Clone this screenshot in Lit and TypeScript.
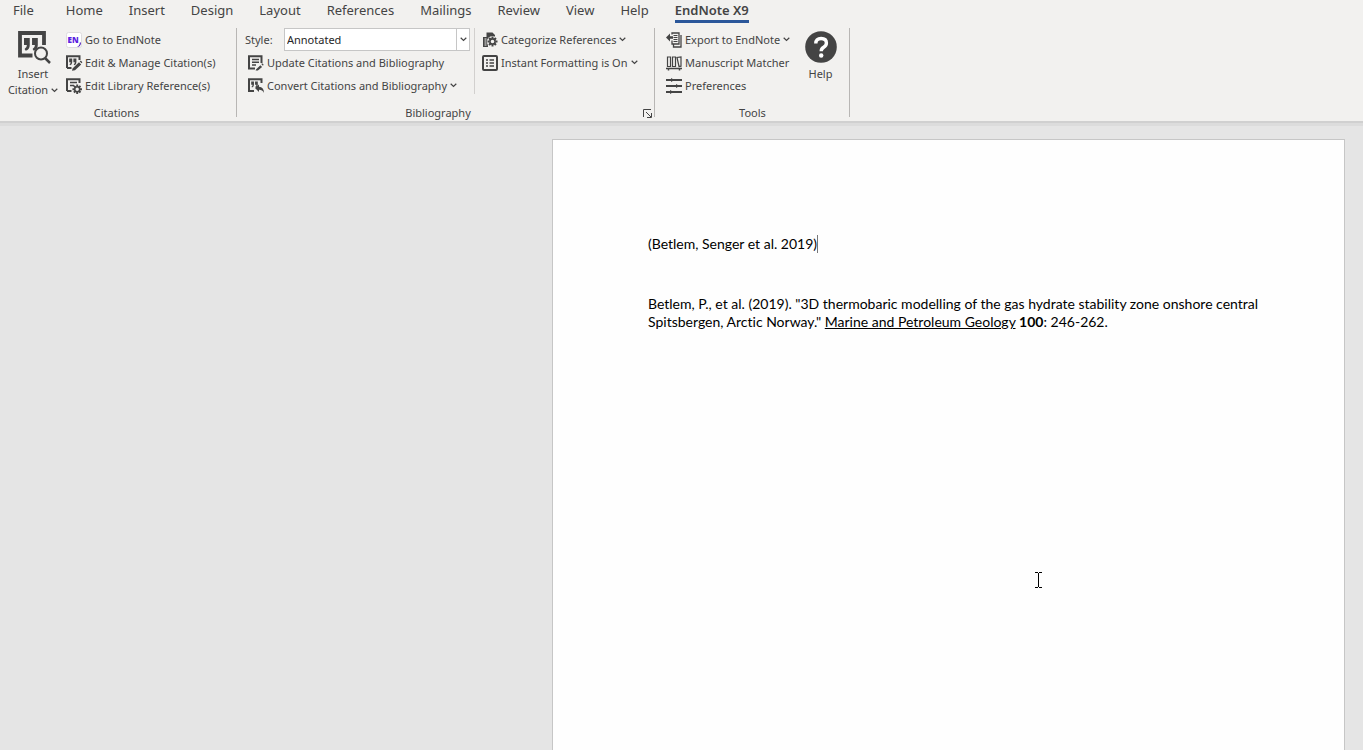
import { LitElement, html, css, svg } from "lit";
import { customElement, state } from "lit/decorators.js";

const quotePair = svg`<path d="M0 0h5v6q0 4-3.500 5L.5 9.600Q2.500 8.500 2.500 6H0zM7 0h5v6q0 4-3.500 5L7.500 9.600Q9.500 8.500 9.500 6H7z"/>`;

const gear = svg`<path d="M-1-5h2v2h-2zM-1 3h2v2h-2zM-5-1h2v2h-2zM3-1h2v2H3z"/><path d="M-3-3L3 3M3-3L-3 3" stroke="currentColor" stroke-width="1.800" transform="scale(1.150)"/><circle r="2.600" fill="#f2f1ef" stroke="currentColor" stroke-width="1.600"/>`;

const frame = svg`<path d="M1 13V1.200h12.500V5M1 13h4.500" fill="none" stroke="currentColor" stroke-width="2"/>`;

const glyphs: Record<string, unknown> = {
  endnote: svg`<rect x=".5" y=".5" width="15" height="15" rx="2" fill="#fff" stroke="#dedcdf"/>
    <text x="1.500" y="10.500" font-size="8" font-weight="800" font-family="Open Sans, sans-serif" fill="#5b1ee0">EN</text>
    <path d="M13.800 10.500q.2 3-3 4.500 4 0 4.200-4.500z" fill="#4a16b8"/>`,
  editCitation: svg`${frame}<g transform="translate(3.200 3.600) scale(.6)">${quotePair}</g>
    <path d="M6.500 13.500L13 7.200l2.200 2.200L9 15.200l-3 .6zM13.800 6.400l1-.9 1.600 1.700-.9 1z"/>`,
  editLibrary: svg`${frame}<path d="M4 4.500h7M4 7.500h4" stroke="currentColor" stroke-width="1.500"/>
    <g transform="translate(11.200 11.200) scale(.95)">${gear}</g>`,
  update: svg`<path d="M7 13.500H1V1.200h12.500V8" fill="none" stroke="currentColor" stroke-width="2"/>
    <path d="M4 4.500h7M4 7.300h7M4 10h4" stroke="currentColor" stroke-width="1.500"/>
    <path d="M8.200 14.200l4.200-4 1.700 1.700-4.200 3.700H7.600zM14.200 8.300l1.500 1.500-.8.900-1.600-1.600z"/>`,
  convert: svg`<path d="M6 13H1V1.200h12.500V5" fill="none" stroke="currentColor" stroke-width="2"/>
    <g transform="translate(3.200 3.400) scale(.55)">${quotePair}</g>
    <path d="M7 10l4-3.500v2.200q5 .3 5 6.300-1.500-3.300-5-3.300v2.200z"/>`,
  categorize: svg`<path d="M4.500.5h6L13 3v3H8L5.500 9 6 15H1V5h3.500z"/>
    <path d="M2.500 7h2M2.500 9h2M2.500 11h2M2.500 13h2" stroke="#f2f1ef"/>
    <circle cx="10.500" cy="9.500" r="5.500" fill="#f2f1ef"/><g transform="translate(10.500 9.500)">${gear}</g>`,
  formatting: svg`<rect x="1" y="1" width="14" height="14" rx="1" fill="none" stroke="currentColor" stroke-width="2"/>
    <path d="M4 5h2M4 8h2M4 11h2M7.500 5H12M7.500 8H12M7.500 11H12" stroke="currentColor" stroke-width="1.700"/>`,
  exportTo: svg`<path d="M6 2.500V1h7v11H6V8.500M15 3v12H7.500v-2.500" fill="none" stroke="currentColor" stroke-width="1.300"/>
    <path d="M7.500 3.500h4M7.500 5.500h4M7.500 7.500h4M7.500 9.500h4" stroke="currentColor"/>
    <path d="M0 5.500l4-4v2.800h3v2.400H4v2.800z"/>`,
  matcher: svg`<path d="M1.500 2v9.500h3V2zM6.500 2v9.500h3V2zM11 2.500l2 9 2-.3V2z" fill="none" stroke="currentColor" stroke-width="1.200"/>
    <path d="M0 13.500h16M2.500 13v2.500M13.500 13v2.500" stroke="currentColor" stroke-width="1.500"/>`,
  preferences: svg`<path d="M0 2h16M0 8h16M0 14h16" stroke="currentColor" stroke-width="2"/>
    <path d="M5 0l3.500 2L5 4zM10 6l3.500 2-3.500 2zM4 12l3.500 2L4 16z"/>`,
};

const icon = (name: string) =>
  html`<svg class="icon" viewBox="0 0 16 16" fill="currentColor" aria-hidden="true">${glyphs[name]}</svg>`;

const chevron = html`<svg class="chevron" viewBox="0 0 7 5" aria-hidden="true"><path d="M.7.8l2.800 2.700L6.300.8" fill="none" stroke="currentColor" stroke-width="1.200"/></svg>`;

const command = (name: string, label: string, menu = false) =>
  html`<button class="command" type="button">${icon(name)}<span>${label}</span>${menu ? chevron : ""}</button>`;

@customElement("app-root")
export class AppRoot extends LitElement {
  @state() private active = "EndNote X9";

  private tabs = ["File", "Home", "Insert", "Design", "Layout", "References", "Mailings", "Review", "View", "Help", "EndNote X9"];

  static styles = css`
    :host {
      display: flex;
      flex-direction: column;
      height: 100vh;
      overflow: hidden;
      background: #e5e5e5;
      color: #444;
      font: 12px/16px "Noto Sans", "Open Sans", sans-serif;
    }
    * { box-sizing: border-box; }
    button {
      border: 0;
      padding: 0;
      background: none;
      color: inherit;
      font: inherit;
      white-space: nowrap;
    }
    svg { display: block; flex: none; overflow: visible; }
    header {
      flex: none;
      background: #f2f1ef;
      border-bottom: 2px solid #d0d0d0;
      box-shadow: 0 3px 0 #dcdcdc;
    }
    .tabs {
      display: flex;
      gap: 26px;
      padding-left: 13px;
      font-size: 13px;
      line-height: 20px;
    }
    .tab { height: 23px; border-bottom: 3px solid transparent; }
    .tab:first-child { margin-right: 6px; }
    .tab.active { font-weight: 600; border-color: #2b579a; }
    .ribbon { display: flex; padding-top: 5px; }
    .group {
      display: flex;
      flex-direction: column;
      position: relative;
      height: 93px;
    }
    .group::after {
      content: "";
      position: absolute;
      top: 0;
      right: 0;
      bottom: 4px;
      border-right: 1px solid #b8b6b4;
    }
    .citations { width: 237px; }
    .bibliography { width: 418px; }
    .tools { width: 195px; }
    .body { display: flex; flex: 1; }
    .caption {
      position: relative;
      margin: 0;
      font-size: 11px;
      line-height: 16px;
      font-weight: 400;
      text-align: center;
    }
    .citations .caption { padding-right: 4px; }
    .bibliography .caption { padding-right: 16px; }
    .rows { display: flex; flex-direction: column; align-items: flex-start; }
    .command { display: flex; flex: none; align-items: center; height: 23px; gap: 3px; font-size: 11px; }
    .icon { width: 16px; height: 16px; }
    .chevron { width: 7px; height: 5px; }
    .large {
      display: flex;
      flex-direction: column;
      align-items: center;
      align-self: flex-start;
      padding-top: 3px;
      font-size: 11px;
    }
    .large svg.big { width: 32px; height: 32px; margin-bottom: 3px; }
    .large .line { display: flex; align-items: center; gap: 3px; }
    .insert { width: 66px; }
    .insert svg.big { margin-left: 2px; }
    .refs { padding-left: 10px; width: 238px; border-right: 1px solid #d2d0ce; height: 66px; }
    .refs .command { padding-left: 1px; }
    .style { display: flex; flex: none; align-items: center; width: 225px; height: 23px; font-size: 11px; margin-left: -2px; }
    .style label { width: 39px; }
    .combo { position: relative; flex: 1; height: 23px; }
    select {
      appearance: none;
      width: 100%;
      height: 23px;
      margin: 0;
      padding: 0 16px 0 2px;
      border: 1px solid #c6c6c6;
      border-radius: 0;
      background: #fff;
      color: #262626;
      font: inherit;
    }
    .drop {
      position: absolute;
      top: 1px;
      right: 1px;
      bottom: 1px;
      width: 13px;
      display: grid;
      place-items: center;
      border-left: 1px solid #c6c6c6;
      pointer-events: none;
    }
    .more { padding-left: 7px; }
    .launcher { position: absolute; right: 3px; top: 4px; }
    .tools .rows { padding-left: 11px; width: 138px; }
    .help { width: 55px; }
    main { flex: 1; display: flex; justify-content: flex-end; padding: 16px 18px 0; min-height: 0; }
    article {
      position: relative;
      width: 793px;
      padding: 95px 80px 0 95px;
      border: 1px solid #c6c6c6;
      border-bottom: 0;
      background: #fefefe;
      color: #000;
      font: 14px/18px Lato, sans-serif;
      font-variant-ligatures: none;
    }
    article p { margin: 0 0 42px; }
    .caret { display: inline-block; width: 1px; height: 18px; background: #777; vertical-align: top; }
    .pointer { position: absolute; left: 482px; top: 432px; width: 7px; height: 16px; }
  `;

  render() {
    return html`
      <header>
        <nav class="tabs">
          ${this.tabs.map((t) => html`<button type="button" class="tab ${t === this.active ? "active" : ""}" @click=${() => (this.active = t)}>${t}</button>`)}
        </nav>
        <div class="ribbon">
          <section class="group citations">
            <div class="body">
              <button type="button" class="large insert">
                <svg class="big" viewBox="0 0 32 32" fill="currentColor" aria-hidden="true">
                  <path d="M14.500 24.500H2V2h24v12" fill="none" stroke="currentColor" stroke-width="3.800"/>
                  <g transform="translate(6 7) scale(1.150)">${quotePair}</g>
                  <circle cx="23" cy="22.500" r="6" fill="#f2f1ef" stroke="currentColor" stroke-width="2"/>
                  <path d="M27 27l5 5" stroke="currentColor" stroke-width="2.500"/>
                </svg>
                <span>Insert</span>
                <span class="line">Citation ${chevron}</span>
              </button>
              <div class="rows">
                ${command("endnote", "Go to EndNote")}
                ${command("editCitation", "Edit & Manage Citation(s)")}
                ${command("editLibrary", "Edit Library Reference(s)")}
              </div>
            </div>
            <h2 class="caption">Citations</h2>
          </section>
          <section class="group bibliography">
            <div class="body">
              <div class="rows refs">
                <div class="style">
                  <label for="style">Style:</label>
                  <div class="combo">
                    <select id="style"><option>Annotated</option></select>
                    <span class="drop">${chevron}</span>
                  </div>
                </div>
                ${command("update", "Update Citations and Bibliography")}
                ${command("convert", "Convert Citations and Bibliography", true)}
              </div>
              <div class="rows more">
                ${command("categorize", "Categorize References", true)}
                ${command("formatting", "Instant Formatting is On", true)}
              </div>
            </div>
            <h2 class="caption">Bibliography
              <button type="button" class="launcher" aria-label="Bibliography settings">
                <svg width="9" height="9" viewBox="0 0 9 9" fill="none" stroke="currentColor" aria-hidden="true"><path d="M.5 8V.5H8M3 3l5 5M8.500 4v4.500H4"/></svg>
              </button>
            </h2>
          </section>
          <section class="group tools">
            <div class="body">
              <div class="rows">
                ${command("exportTo", "Export to EndNote", true)}
                ${command("matcher", "Manuscript Matcher")}
                ${command("preferences", "Preferences")}
              </div>
              <button type="button" class="large help">
                <svg class="big" viewBox="0 0 32 32" aria-hidden="true">
                  <circle cx="16" cy="16" r="15.800" fill="currentColor"/>
                  <path d="M10.800 12.500q0-5 5.300-5t5.300 4.500q0 2.500-2.700 4.200-2.500 1.500-2.500 4" fill="none" stroke="#fff" stroke-width="3.400"/>
                  <circle cx="16.200" cy="24.500" r="2.200" fill="#fff"/>
                </svg>
                <span>Help</span>
              </button>
            </div>
            <h2 class="caption">Tools</h2>
          </section>
        </div>
      </header>
      <main>
        <article>
          <p>(Betlem, Senger et al. 2019)<span class="caret"></span></p>
          <p>Betlem, P., et al. (2019). "3D thermobaric modelling of the gas hydrate stability zone onshore central Spitsbergen, Arctic Norway." <u>Marine and Petroleum Geology</u> <b>100</b>: 246-262.</p>
          <svg class="pointer" viewBox="0 0 7 16" fill="none" stroke="#000" shape-rendering="crispEdges" aria-hidden="true"><path d="M0 .5h3M4 .5h3M3.500 1v14M0 15.500h3M4 15.500h3"/></svg>
        </article>
      </main>
    `;
  }
}
